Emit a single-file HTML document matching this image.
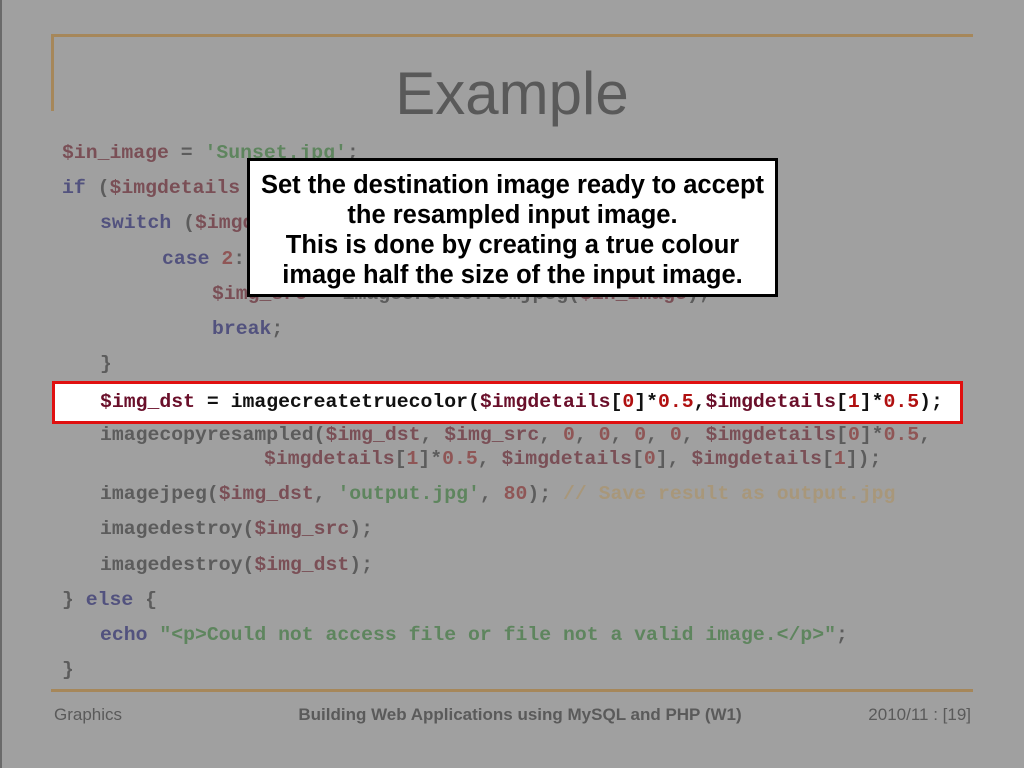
<!DOCTYPE html>
<html><head><meta charset="utf-8"><style>
html,body{margin:0;padding:0}
body{width:1024px;height:768px;background:#a0a0a0;position:relative;overflow:hidden;font-family:"Liberation Sans",sans-serif}
.edge{position:absolute;left:0;top:0;width:2px;height:768px;background:#6a6a6a}
.g{position:absolute;background:#a6875a}
.c{position:absolute;font-family:"Liberation Mono",monospace;font-weight:bold;font-size:19.8px;line-height:24px;white-space:pre;color:#5c5c5c}
.v{color:#7a4f56}.k{color:#52527e}.s{color:#5e855e}.n{color:#8f5656}.cm{color:#a8977a}
.title{position:absolute;left:0;width:1024px;top:57px;text-align:center;font-size:60px;color:#595959;line-height:74px}
.ft{position:absolute;top:705px;font-size:17px;color:#5a5a5a;line-height:20px}
.red{position:absolute;left:52px;top:381px;width:905px;height:37px;border:3px solid #e01010;background:#fff}
.red .c{left:45px;top:6px;color:#111}
.red .v{color:#6a0f2a}.red .n{color:#b01010}
.call{position:absolute;left:247px;top:158px;width:525px;border:3px solid #000;background:#fff;text-align:center;font-weight:bold;font-size:25.5px;line-height:30px;color:#000;padding-top:9px;height:124px;white-space:nowrap}
</style></head><body>
<div class="edge"></div>
<div class="g" style="left:51px;top:34px;width:922px;height:3px"></div>
<div class="g" style="left:51px;top:34px;width:3px;height:77px"></div>
<div class="g" style="left:51px;top:689px;width:922px;height:3px"></div>
<div class="title">Example</div>

<div class="c" style="left:62px;top:141px"><span class="v">$in_image</span> = <span class="s">'Sunset.jpg'</span>;</div>
<div class="c" style="left:62px;top:176px"><span class="k">if</span> (<span class="v">$imgdetails</span> = getimagesize(<span class="v">$in_image</span>)) {</div>
<div class="c" style="left:100px;top:211px"><span class="k">switch</span> (<span class="v">$imgdetails</span>[<span class="n">2</span>]) {</div>
<div class="c" style="left:162px;top:247px"><span class="k">case</span> <span class="n">2</span>:</div>
<div class="c" style="left:212px;top:282px"><span class="v">$img_src</span> = imagecreatefromjpeg(<span class="v">$in_image</span>);</div>
<div class="c" style="left:212px;top:317px"><span class="k">break</span>;</div>
<div class="c" style="left:100px;top:352px">}</div>
<div class="red"><div class="c"><span class="v">$img_dst</span> = imagecreatetruecolor(<span class="v">$imgdetails</span>[<span class="n">0</span>]*<span class="n">0.5</span>,<span class="v">$imgdetails</span>[<span class="n">1</span>]*<span class="n">0.5</span>);</div></div>
<div class="c" style="left:100px;top:423px">imagecopyresampled(<span class="v">$img_dst</span>, <span class="v">$img_src</span>, <span class="n">0</span>, <span class="n">0</span>, <span class="n">0</span>, <span class="n">0</span>, <span class="v">$imgdetails</span>[<span class="n">0</span>]*<span class="n">0.5</span>,</div>
<div class="c" style="left:264px;top:447px"><span class="v">$imgdetails</span>[<span class="n">1</span>]*<span class="n">0.5</span>, <span class="v">$imgdetails</span>[<span class="n">0</span>], <span class="v">$imgdetails</span>[<span class="n">1</span>]);</div>
<div class="c" style="left:100px;top:482px">imagejpeg(<span class="v">$img_dst</span>, <span class="s">'output.jpg'</span>, <span class="n">80</span>); <span class="cm">// Save result as output.jpg</span></div>
<div class="c" style="left:100px;top:517px">imagedestroy(<span class="v">$img_src</span>);</div>
<div class="c" style="left:100px;top:553px">imagedestroy(<span class="v">$img_dst</span>);</div>
<div class="c" style="left:62px;top:588px">} <span class="k">else</span> {</div>
<div class="c" style="left:100px;top:623px"><span class="k">echo</span> <span class="s">"&lt;p&gt;Could not access file or file not a valid image.&lt;/p&gt;"</span>;</div>
<div class="c" style="left:62px;top:658px">}</div>

<div class="call">Set the destination image ready to accept<br>the resampled input image.<br>This is done by creating a true colour<br>image half the size of the input image.</div>

<div class="ft" style="left:54px">Graphics</div>
<div class="ft" style="left:0;width:1040px;text-align:center;font-weight:bold">Building Web Applications using MySQL and PHP (W1)</div>
<div class="ft" style="right:53px">2010/11 : [19]</div>
</body></html>
